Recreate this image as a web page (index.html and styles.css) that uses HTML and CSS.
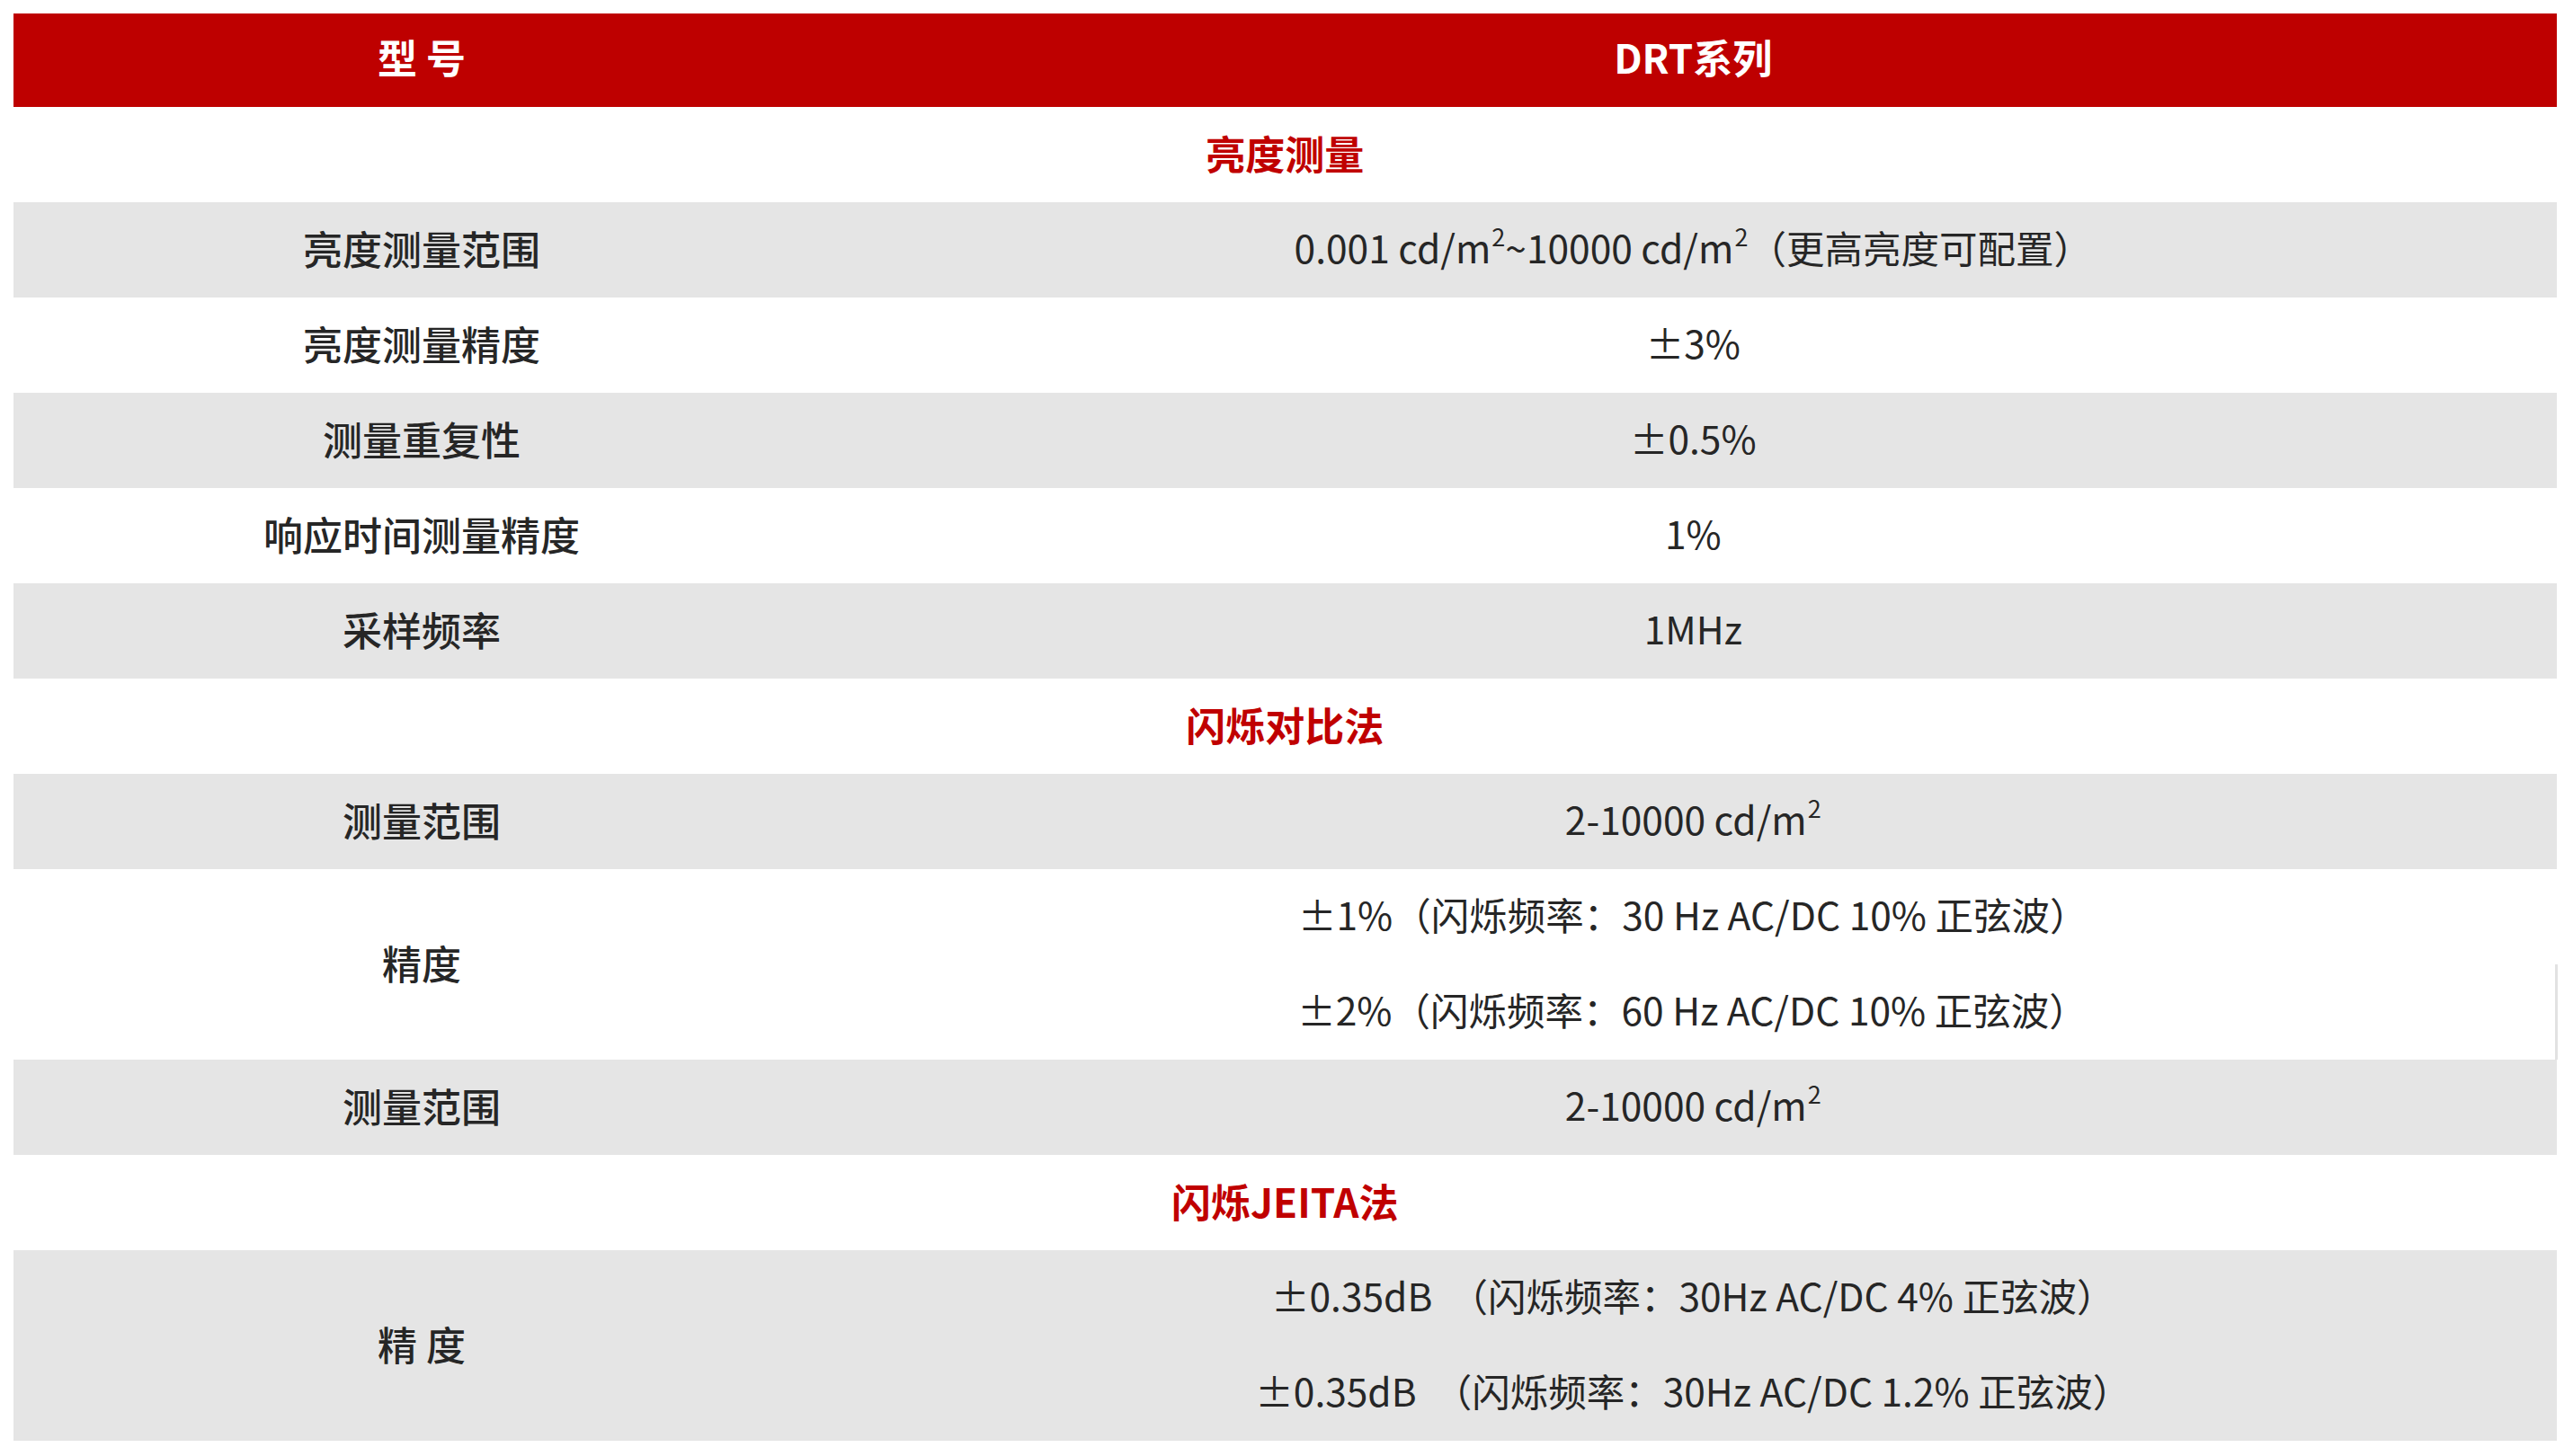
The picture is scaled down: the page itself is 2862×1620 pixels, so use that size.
FILE: index.html
```html
<!DOCTYPE html>
<html lang="zh-CN">
<head>
<meta charset="utf-8">
<title>DRT系列</title>
<link rel="stylesheet" href="styles.css">
</head>
<body>
<table class="spec">
  <colgroup><col class="c-label"><col class="c-value"></colgroup>
  <thead>
    <tr class="head"><th>型&nbsp;号</th><th>DRT系列</th></tr>
  </thead>
  <tbody>
    <tr class="section"><td colspan="2">亮度测量</td></tr>
    <tr class="grey"><td class="label">亮度测量范围</td><td class="value">0.001 cd/m<sup>2</sup>~10000 cd/m<sup>2</sup>（更高亮度可配置）</td></tr>
    <tr><td class="label">亮度测量精度</td><td class="value">±3%</td></tr>
    <tr class="grey"><td class="label">测量重复性</td><td class="value">±0.5%</td></tr>
    <tr><td class="label">响应时间测量精度</td><td class="value">1%</td></tr>
    <tr class="grey"><td class="label">采样频率</td><td class="value">1MHz</td></tr>
    <tr class="section"><td colspan="2">闪烁对比法</td></tr>
    <tr class="grey"><td class="label">测量范围</td><td class="value">2-10000 cd/m<sup>2</sup></td></tr>
    <tr><td class="label" rowspan="2">精度</td><td class="value">±1%（闪烁频率：30 Hz AC/DC 10% 正弦波）</td></tr>
    <tr><td class="value edge">±2%（闪烁频率：60 Hz AC/DC 10% 正弦波）</td></tr>
    <tr class="grey"><td class="label">测量范围</td><td class="value">2-10000 cd/m<sup>2</sup></td></tr>
    <tr class="section"><td colspan="2">闪烁JEITA法</td></tr>
    <tr class="grey"><td class="label" rowspan="2">精&nbsp;度</td><td class="value">±0.35dB &nbsp;（闪烁频率：30Hz AC/DC 4% 正弦波）</td></tr>
    <tr class="grey"><td class="value">±0.35dB &nbsp;（闪烁频率：30Hz AC/DC 1.2% 正弦波）</td></tr>
  </tbody>
</table>
</body>
</html>
```
FILE: styles.css
```css
html, body {
  margin: 0;
  padding: 0;
  background: #ffffff;
}
body {
  padding: 15px 0 0 15px;
  font-family: "Noto Sans CJK SC", "Noto Sans", sans-serif;
  color: #2b2b2b;
}
.spec {
  width: 2830px;
  border-collapse: collapse;
  border-spacing: 0;
  table-layout: fixed;
}
.c-label { width: 908px; }
.spec th, .spec td {
  height: 106px;
  padding: 0 0 5px 0;
  box-sizing: border-box;
  text-align: center;
  vertical-align: middle;
  font-size: 44px;
  line-height: 1;
}
.head th {
  background: #be0000;
  color: #ffffff;
  font-weight: 700;
  height: 104px;
  padding-bottom: 9px;
}
.section td {
  color: #c00000;
  font-weight: 700;
  background: #ffffff;
}
.grey td { background: #e5e5e5; }
.label {
  font-weight: 500;
  color: #262626;
}
.spec td.value {
  font-weight: 400;
  font-size: 42.5px;
  color: #262626;
}
.value.edge { border-right: 3px solid #e2e2e2; }
.value sup {
  font-size: 27px;
  line-height: 0;
  vertical-align: 19px;
  margin-left: 1px;
}
```
